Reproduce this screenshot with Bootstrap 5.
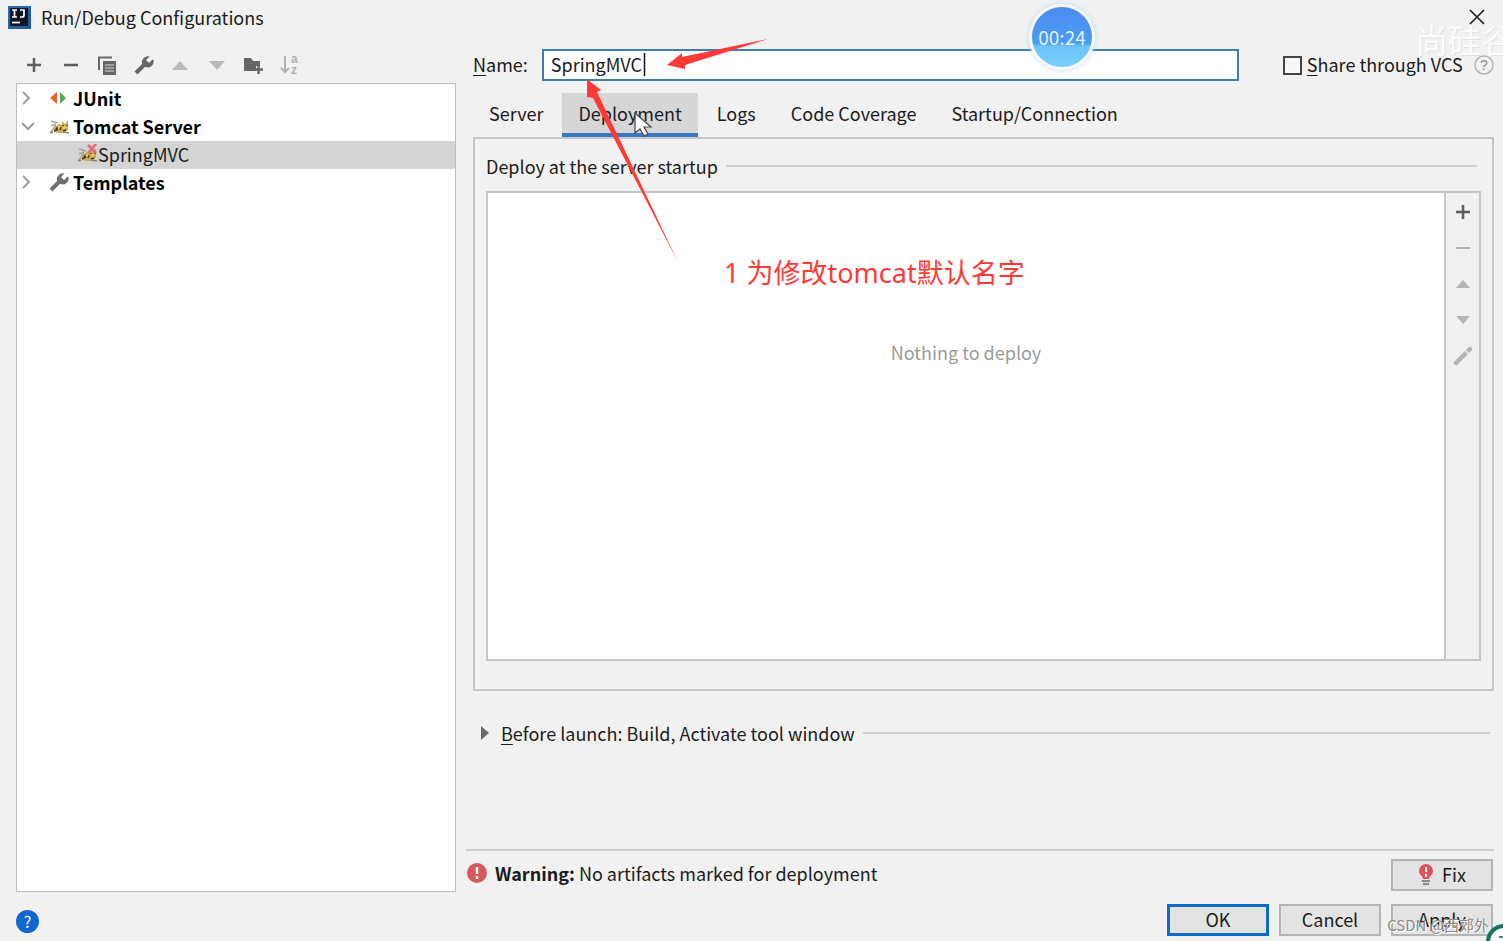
<!DOCTYPE html>
<html lang="en">
<head>
<meta charset="utf-8">
<meta name="viewport" content="width=device-width, initial-scale=1">
<title>Run/Debug Configurations</title>
<link href="https://cdn.jsdelivr.net/npm/bootstrap@5.3.0/dist/css/bootstrap.min.css" rel="stylesheet">
<style>
  body { background: #f1f1f1; color: #1c1c1c; font-family: "Noto Sans CJK SC", sans-serif; font-size: 18px; line-height: 28px; }
  svg { display: block; flex: none; }
  svg text { font-family: "Liberation Sans", sans-serif; }
  u { text-underline-offset: 3px; }
  .dialog { height: 100vh; min-height: 700px; overflow: hidden; }
  .dialog-body { min-height: 0; }
  .title-bar { height: 36px; padding: 0 18px 2px 8px; }
  .title-bar span { margin-left: 10px; }
  .icon-btn { background: none; border: 0; padding: 0; display: flex; align-items: center; justify-content: center; }
  .side { flex: 0 0 440px; }
  .tools { width: 286px; height: 47px; padding: 12px 0 0 6px; }
  .tools .icon-btn { width: 24px; height: 34px; }
  .tree { background: #fff; border: 1px solid #bdbdbd; padding-top: 1px; }
  .tree .node { height: 28px; padding: 0 0 2px 4px; color: #000; }
  .tree .twisty { width: 14px; margin-right: 14px; }
  .tree .child { padding-left: 60px; background: #d4d4d4; color: #1c1c1c; }
  .content-pane { margin: 0 9px 0 1px; min-width: 0; }
  .name-row { margin-top: 13px; height: 32px; }
  .name-row label { padding-bottom: 2px; }
  .name-input { width: 697px; height: 32px; flex: 0 1 697px; border: 2px solid #3d7fb5; border-radius: 0; padding: 0 7px 2px; font-size: 18px; color: #1c1c1c; background: #fff; margin-left: 14px; outline: 0; }
  .vcs { margin-left: 44px; gap: 5px; white-space: nowrap; }
  .vcs input { appearance: none; width: 19px; height: 19px; border: 2px solid #444; background: #f8f8f8; margin: 0; }
  .tabs { margin-top: 12px; gap: 3px; }
  .tabs .nav-link { background: none; color: #1c1c1c; height: 44px; padding: 6px 16px; border: 0; border-bottom: 4px solid transparent; border-radius: 0; line-height: 28px; }
  .tabs .nav-link.active { background: #d6d6d6; border-color: #3a78c3; color: #1c1c1c; }
  .panel { border: 2px solid #c6c6c6; padding: 13px 11px 28px; height: 554px; flex: 0 1 554px; }
  .rule { height: 2px; background: #d0d0d0; flex: 1; }
  .deploy-box { border: 2px solid #c6c6c6; margin-top: 11px; }
  .deploy-list { background: #fff; color: #9b9b9b; padding-top: 145px; }
  .deploy-tools { width: 35px; border-left: 2px solid #c6c6c6; padding-top: 1px; }
  .deploy-tools .icon-btn { width: 33px; height: 36px; }
  .launch { margin-top: 28px; padding: 0 4px 0 8px; }
  .warning { border-top: 2px solid #cfcfcf; margin-left: -7px; padding: 8px 1px 0 1px; height: 43px; }
  .push { color: #1c1c1c; height: 32px; width: 102px; border: 2px solid #b5b5b5; border-radius: 0; background: #e3e3e3; padding: 0 0 2px; font-size: 18px; line-height: 26px; }
  .push:hover { background: #e8eef5; }
  .push.default { border: 3px solid #0f69c5; line-height: 24px; }
  .foot { height: 49px; padding: 12px 10px 0 16px; }
  .foot-actions { gap: 10px; }
  .help-dot { width: 23px; height: 23px; border-radius: 50%; background: #1268cf; color: #fff; font-size: 16px; line-height: 23px; margin-top: 6px; }
  .over { position: absolute; pointer-events: none; }
  .note { left: 724px; top: 253px; font-size: 27px; line-height: 40px; color: #ff3a36; white-space: nowrap; font-family: "Noto Sans", "Noto Sans CJK SC", sans-serif; }
  .timer { left: 1029px; top: 4px; width: 66px; height: 66px; border-radius: 50%; border: 3px solid #f6f9fd; background: linear-gradient(#4d8ff1 0 12%, #489cf4 60%, #6cc4f8 66%, #79cff9); box-shadow: 0 0 5px #bcd5ee; color: #e4f2ff; font-size: 19px; line-height: 60px; text-align: center; }
  .brand { right: 0; top: 12px; width: 88px; height: 54px; overflow: hidden; font-size: 33px; line-height: 54px; color: #fbfbfb; white-space: nowrap; text-shadow: 1px 1px 0 #e2e2e2; }
  .author { right: 14px; bottom: 4px; font-size: 15px; line-height: 24px; color: #8b8b8b; text-shadow: 1px 1px 0 #fff; white-space: nowrap; }
</style>
</head>
<body>
<div class="dialog d-flex flex-column position-relative">
  <header class="title-bar d-flex align-items-center">
    <svg width="23" height="23" viewBox="0 0 23 23"><defs><linearGradient id="frame" x2="1" y2="1"><stop offset="0" stop-color="#2a6fb4"/><stop offset="1" stop-color="#1e5aa0"/></linearGradient></defs><rect width="23" height="23" fill="url(#frame)"/><rect x="2" y="2" width="18" height="18" fill="#101624"/><path d="M4 4h5M6.500 4v7M4 11h5M12 4h4v5q0 2-2 2h-2" fill="none" stroke="#fff" stroke-width="1.700"/><path d="M4 16.500h8" stroke="#fff" stroke-width="1.700"/></svg>
    <span>Run/Debug Configurations</span>
    <button class="icon-btn ms-auto" aria-label="Close"><svg width="16" height="16" viewBox="0 0 16 16"><path d="M1 1l14 14M15 1L1 15" stroke="#222" stroke-width="1.700"/></svg></button>
  </header>

  <main class="dialog-body d-flex flex-fill">
    <aside class="side d-flex flex-column ms-3 me-3">
      <div class="tools d-flex justify-content-between">
        <button class="icon-btn" aria-label="Add"><svg width="16" height="16"><path d="M8 1v14M1 8h14" stroke="#5d5d5d" stroke-width="2.500"/></svg></button>
        <button class="icon-btn" aria-label="Remove"><svg width="16" height="16"><path d="M1 8h14" stroke="#5d5d5d" stroke-width="2.500"/></svg></button>
        <button class="icon-btn" aria-label="Copy"><svg width="18" height="19"><path d="M1 14V1.500h13" fill="none" stroke="#6a6a6a" stroke-width="2"/><path d="M5 5h13v14H5z" fill="#666"/><path d="M7 9h9M7 12h9M7 15h9" stroke="#b5b5b5" stroke-width="1.500"/></svg></button>
        <button class="icon-btn" aria-label="Edit templates"><svg width="20" height="20" viewBox="0 0 20 20"><path d="M2 18L12 8" stroke="#666" stroke-width="4"/><path d="M18.500 4.500L15 8l-3-3 3.500-3.500A6 6 0 0 0 8 8.500L11.500 12A6 6 0 0 0 19.500 5z" fill="#666"/></svg></button>
        <button class="icon-btn" aria-label="Move up" disabled><svg width="16" height="9"><path d="M0 9L8 0l8 9z" fill="#b9b9b9"/></svg></button>
        <button class="icon-btn" aria-label="Move down" disabled><svg width="16" height="9"><path d="M0 0l8 9 8-9z" fill="#b9b9b9"/></svg></button>
        <button class="icon-btn" aria-label="New folder"><svg width="21" height="18"><path d="M1 2h7l2 3h7v5h-4v5H1z" fill="#666"/><path d="M15.500 9v9M11 13.500h9" stroke="#666" stroke-width="2.500"/></svg></button>
        <button class="icon-btn" aria-label="Sort alphabetically" disabled><svg width="20" height="26" viewBox="0 0 20 26"><path d="M5 4v16M1 16l4 4 4-4" fill="none" stroke="#b0b0b0" stroke-width="2"/><g fill="#b0b0b0" font-size="12" font-weight="700"><text x="11" y="11">a</text><text x="11" y="22">z</text></g></svg></button>
      </div>
      <div class="tree flex-fill" role="tree">
        <div class="node d-flex align-items-center fw-bold" role="treeitem"><svg class="twisty" height="14"><path d="M2 1l6 6-6 6" fill="none" stroke="#9b9b9b" stroke-width="2"/></svg><svg width="24" height="16"><path d="M8 2v12L1 8z" fill="#e8632b"/><path d="M11 2v12l6-6z" fill="#58a55c"/></svg><span>JUnit</span></div>
        <div class="node d-flex align-items-center fw-bold" role="treeitem"><svg class="twisty" height="14"><path d="M1 4l6 6 6-6" fill="none" stroke="#9b9b9b" stroke-width="2"/></svg><svg width="24" height="20" viewBox="0 0 24 20"><g id="cat"><path d="M2 5l7 2M2 10l5-2M7 9L1 17" fill="none" stroke="#aaa59a" stroke-width="1.400"/><path d="M5 12l5-4 3 1 0-4 3 3 3-4 0 6 0 4-4 3-5 0-5-1z" fill="#c9ae55"/><path d="M7 13l2-2M11 14l1-3M5 15l4-2M14 15l3-1M18 9v1M14 9v1" stroke="#403a2c" stroke-width="1.600"/><path d="M9 12l2-1M14 12l3-1" stroke="#f2d24b" stroke-width="2"/><path d="M14 16l6 1M4 16l-2 1" stroke="#8a8474" stroke-width="1.600"/></g></svg><span>Tomcat Server</span></div>
        <div class="node child d-flex align-items-center" role="treeitem" aria-selected="true"><svg width="21" height="20" viewBox="0 0 21 20"><use href="#cat"/><path d="M11 1l8 8M19 0l-8 9" stroke="#e56b72" stroke-width="2.500"/></svg><span>SpringMVC</span></div>
        <div class="node d-flex align-items-center fw-bold" role="treeitem"><svg class="twisty" height="14"><path d="M2 1l6 6-6 6" fill="none" stroke="#9b9b9b" stroke-width="2"/></svg><svg width="24" height="20" viewBox="0 0 24 20"><path d="M2 18L12 8" stroke="#707070" stroke-width="4"/><path d="M18.500 4.500L15 8l-3-3 3.500-3.500A6 6 0 0 0 8 8.500L11.500 12A6 6 0 0 0 19.500 5z" fill="#707070"/></svg><span>Templates</span></div>
      </div>
    </aside>

    <section class="content-pane d-flex flex-column flex-fill">
      <div class="name-row d-flex align-items-center">
        <label for="cfg-name"><u>N</u>ame:</label>
        <input id="cfg-name" class="name-input" type="text" value="SpringMVC">
        <div class="vcs d-flex align-items-center"><input type="checkbox" id="share"><label for="share"><u>S</u>hare through VCS</label></div>
        <button class="icon-btn ms-auto" aria-label="Help on sharing"><svg width="20" height="20"><circle cx="10" cy="10" r="9" fill="none" stroke="#b4b4b4" stroke-width="1.500"/><text x="10" y="15" text-anchor="middle" font-size="14" fill="#888">?</text></svg></button>
      </div>
      <ul class="nav tabs flex-nowrap">
        <li class="nav-item"><button class="nav-link">Server</button></li>
        <li class="nav-item"><button class="nav-link active">Deployment</button></li>
        <li class="nav-item"><button class="nav-link">Logs</button></li>
        <li class="nav-item"><button class="nav-link">Code Coverage</button></li>
        <li class="nav-item"><button class="nav-link">Startup/Connection</button></li>
      </ul>
      <div class="panel d-flex flex-column">
        <div class="d-flex align-items-center gap-2 pe-1"><span>Deploy at the server startup</span><span class="rule"></span></div>
        <div class="deploy-box d-flex flex-fill">
          <div class="deploy-list flex-fill text-center">Nothing to deploy</div>
          <div class="deploy-tools">
            <button class="icon-btn" aria-label="Add artifact"><svg width="16" height="16"><path d="M8 1v14M1 8h14" stroke="#5d5d5d" stroke-width="2.500"/></svg></button>
            <button class="icon-btn" aria-label="Remove artifact" disabled><svg width="16" height="16"><path d="M1 8h14" stroke="#b4b4b4" stroke-width="2"/></svg></button>
            <button class="icon-btn" aria-label="Artifact up" disabled><svg width="14" height="8"><path d="M0 8l7-8 7 8z" fill="#b4b4b4"/></svg></button>
            <button class="icon-btn" aria-label="Artifact down" disabled><svg width="14" height="8"><path d="M0 0l7 8 7-8z" fill="#b4b4b4"/></svg></button>
            <button class="icon-btn" aria-label="Edit artifact" disabled><svg width="20" height="20"><path d="M3 17l10-10M15 5l2-2" stroke="#b4b4b4" stroke-width="4.500" stroke-linecap="round"/><path d="M12 4l4 4" stroke="#f1f1f1" stroke-width="1.500"/></svg></button>
          </div>
        </div>
      </div>
      <div class="launch d-flex align-items-center">
        <svg width="8" height="14"><path d="M0 0l8 7-8 7z" fill="#6a6a6a"/></svg>
        <span class="ms-2 ps-1 me-2"><u>B</u>efore launch: Build, Activate tool window</span><span class="rule"></span>
      </div>
      <div class="warning d-flex mt-auto">
        <svg class="mt-1" width="20" height="20"><circle cx="10" cy="10" r="10" fill="#d9585f"/><path d="M10 4v7M10 13v3" stroke="#fff" stroke-width="2.500"/></svg>
        <span class="ms-2"><b>Warning:</b> No artifacts marked for deployment</span>
        <button class="btn push ms-auto d-flex align-items-center justify-content-center gap-2"><svg width="16" height="21"><path d="M5 15C5 12 1 11 1 7a7 7 0 0 1 14 0c0 4-4 5-4 8z" fill="#e0525e"/><path d="M8 3v5M8 10v3" stroke="#fff" stroke-width="2"/><path d="M4 17h8M5 20h6" stroke="#8c8c8c" stroke-width="2"/></svg>Fix</button>
      </div>
    </section>
  </main>

  <footer class="foot d-flex">
    <button class="icon-btn help-dot" aria-label="Help">?</button>
    <div class="foot-actions d-flex ms-auto">
      <button class="btn push default">OK</button>
      <button class="btn push">Cancel</button>
      <button class="btn push">Apply</button>
    </div>
  </footer>

  <svg class="over top-0 start-0" width="800" height="280">
    <path d="M644.500 53v23" stroke="#111" stroke-width="1.500"/>
    <path d="M635 113v20l5-4 4 7 4-2-4-7h7z" fill="#fff" stroke="#444" stroke-width="1.200"/>
    <path d="M667 65l15-12v4l86-18-83 26v4z" fill="#ff3a36"/>
    <path d="M587 79l14 11-4 2 81 170-85-164-6-1z" fill="#ff3a36"/>
  </svg>
  <div class="over note">1 为修改tomcat默认名字</div>
  <div class="over timer">00:24</div>
  <div class="over brand">尚硅谷</div>
  <div class="over author">CSDN @西郊外</div>
  <svg class="over bottom-0 end-0" width="17" height="18"><circle cx="18" cy="19" r="16" fill="#fff" stroke="#14735a" stroke-width="4"/><path d="M13 14h4" stroke="#4a78a0" stroke-width="2"/></svg>
</div>
<script src="https://cdn.jsdelivr.net/npm/bootstrap@5.3.0/dist/js/bootstrap.bundle.min.js"></script>
</body>
</html>
